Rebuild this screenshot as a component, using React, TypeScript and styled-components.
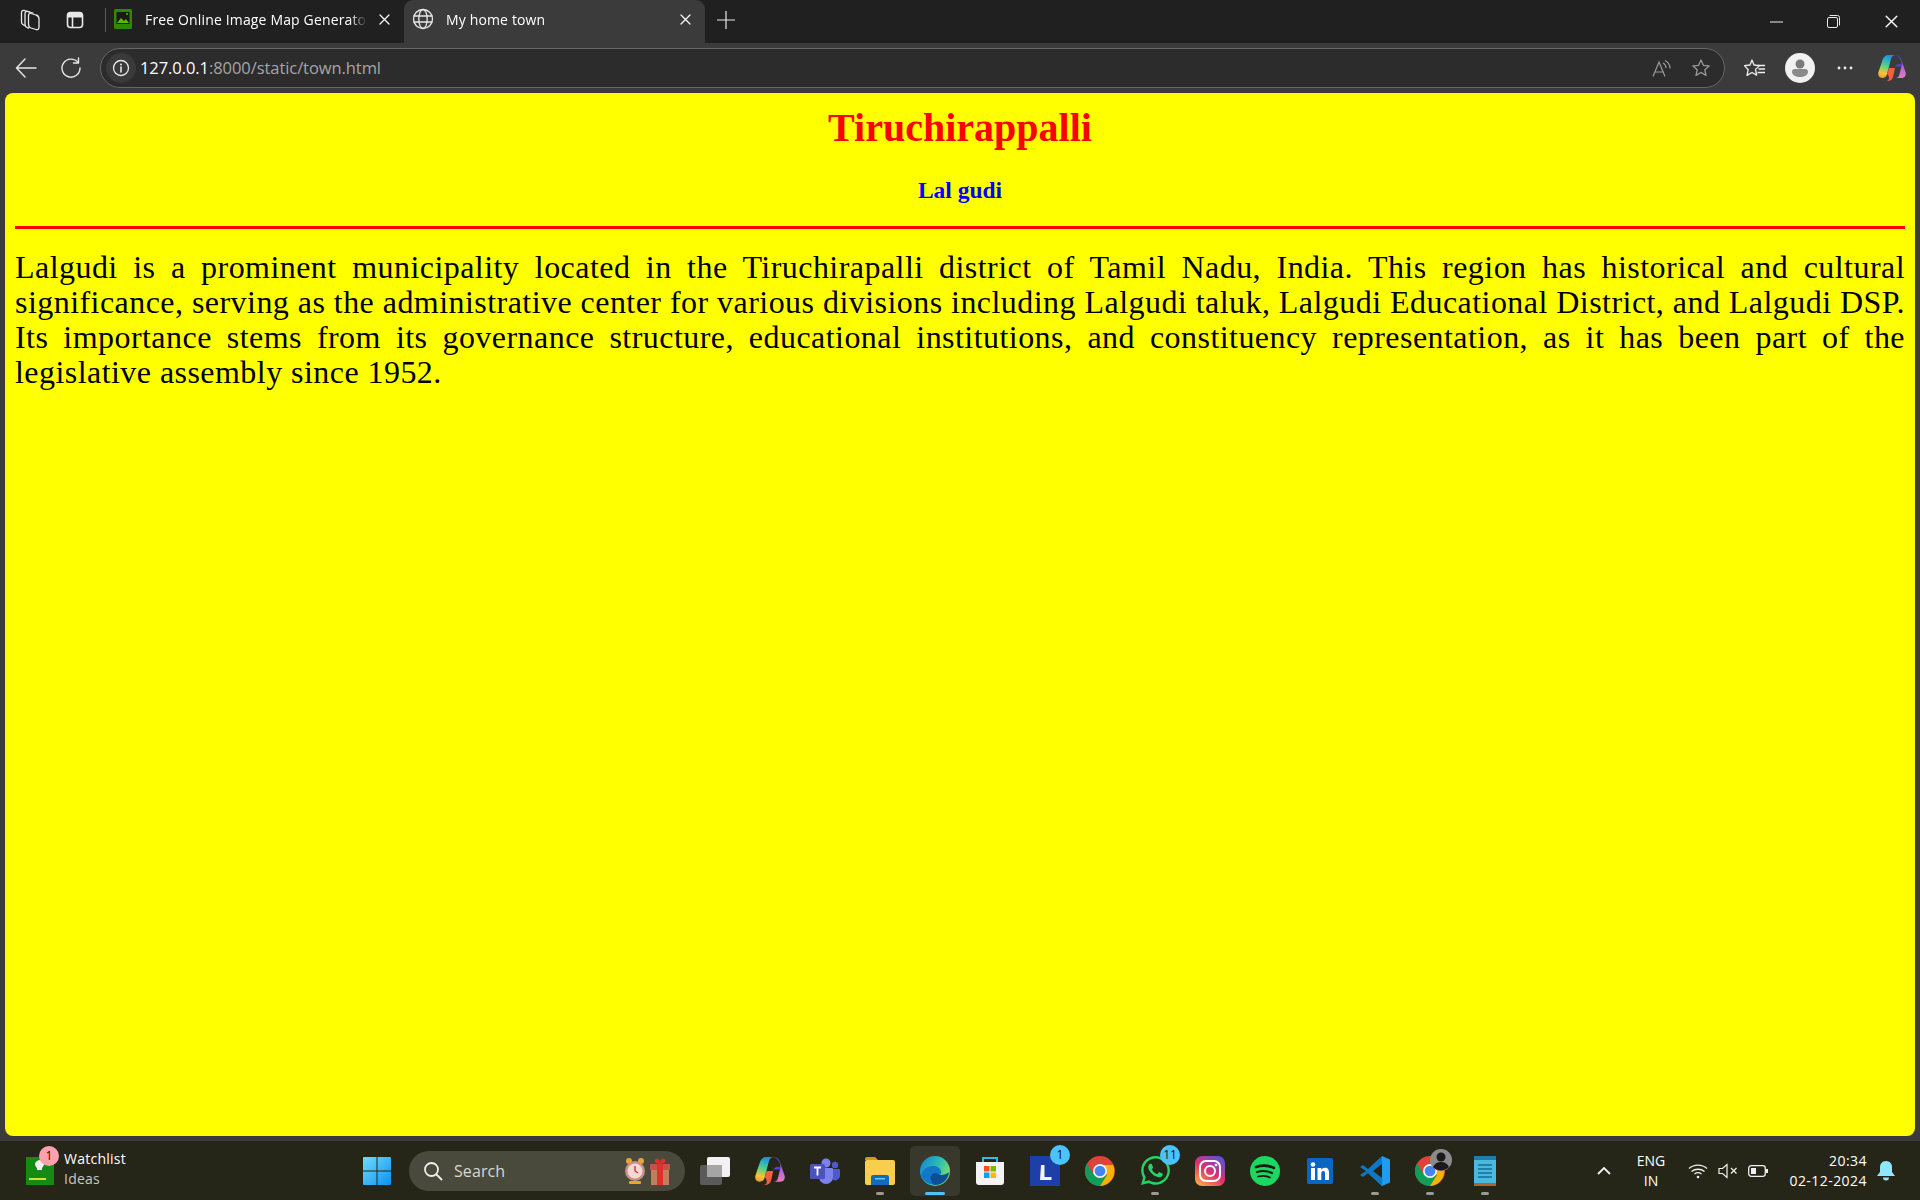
import React from "react";
import styled, { createGlobalStyle } from "styled-components";
import { FaWhatsapp } from "react-icons/fa";

const GlobalStyle = createGlobalStyle`
  html, body {
    margin: 0;
    padding: 0;
    background: #3b3b3b;
    overflow: hidden;
  }
  * {
    box-sizing: border-box;
  }
`;

const uiFont = `"Open Sans", "Noto Sans", "Liberation Sans", sans-serif`;

const Screen = styled.div`
  width: 1920px;
  height: 1200px;
  display: flex;
  flex-direction: column;
  background: #3b3b3b;
  font-family: ${uiFont};
`;

/* ---------- tab strip ---------- */

const TabStrip = styled.div`
  height: 43px;
  flex: none;
  display: flex;
  align-items: stretch;
  background: #202020;
  padding-left: 7px;
`;

const StripButton = styled.div<{ $w?: number }>`
  width: ${(p) => p.$w ?? 45}px;
  padding-bottom: 4px;
  display: flex;
  align-items: center;
  justify-content: center;
  flex: none;
`;

const StripDivider = styled.div`
  width: 1px;
  height: 24px;
  margin: 8px 1px 0 8px;
  background: #5a5a5a;
  flex: none;
`;

const Tab = styled.div<{ $active?: boolean }>`
  width: ${(p) => (p.$active ? "301px" : "297px")};
  flex: none;
  height: 43px;
  display: flex;
  align-items: center;
  gap: 12px;
  padding: 0 14px 5px ${(p) => (p.$active ? 8 : 6)}px;
  color: #fff;
  font-size: 14px;
  border-radius: 9px 9px 0 0;
  background: ${(p) => (p.$active ? "#3b3b3b" : "transparent")};
`;

const TabTitle = styled.span`
  flex: 1;
  white-space: nowrap;
  overflow: hidden;
  letter-spacing: 0.15px;
  -webkit-mask-image: linear-gradient(to right, #000 92%, transparent);
`;

const WindowControls = styled.div`
  margin-left: auto;
  display: flex;
  align-items: center;
`;

const WindowButton = styled.div`
  width: 57.5px;
  height: 43px;
  display: flex;
  align-items: center;
  justify-content: center;
`;

/* ---------- toolbar ---------- */

const Toolbar = styled.div`
  height: 50px;
  flex: none;
  display: flex;
  align-items: center;
  padding: 0 4px 0 3px;
  background: #3b3b3b;
`;

const ToolButton = styled.div<{ $w?: number }>`
  width: ${(p) => p.$w ?? 45}px;
  height: 38px;
  flex: none;
  display: flex;
  align-items: center;
  justify-content: center;
`;

const AddressBar = styled.div`
  width: 1625px;
  height: 40px;
  margin: 0 7px;
  flex: none;
  display: flex;
  align-items: center;
  border: 1.5px solid #666;
  border-radius: 20px;
  background: #2c2c2c;
  padding: 0 13px 0 5px;
`;

const InfoChip = styled.div`
  width: 30px;
  height: 30px;
  border-radius: 50%;
  background: #3a3a3a;
  display: flex;
  align-items: center;
  justify-content: center;
  flex: none;
`;

const Url = styled.div`
  margin-left: 4px;
  padding-bottom: 2px;
  font-size: 16.5px;
  letter-spacing: -0.07px;
  color: #a6a6a6;
  flex: 1;
  span {
    color: #fff;
  }
`;

const AddressIcons = styled.div`
  display: flex;
  align-items: center;
  gap: 19px;
`;

const Avatar = styled.div`
  width: 30px;
  height: 30px;
  border-radius: 50%;
  background: #f1f1f1;
  display: flex;
  align-items: center;
  justify-content: center;
`;

/* ---------- page ---------- */

const Viewport = styled.div`
  height: 1043px;
  margin: 0 5px;
  flex: none;
  background: #ffff00;
  border-radius: 8px;
  padding: 0 10px;
  font-family: "Liberation Serif", "Times New Roman", serif;
`;

const Heading = styled.h1`
  margin: 0;
  padding-top: 13px;
  text-align: center;
  font-size: 40px;
  line-height: 43px;
  font-weight: 700;
  color: #ff0000;
`;

const SubHeading = styled.h2`
  margin: 28px 0 0;
  text-align: center;
  font-size: 23.5px;
  line-height: 27px;
  font-weight: 700;
  color: #0000ff;
`;

const Rule = styled.hr`
  margin: 22px 0 0;
  height: 3px;
  border: none;
  background: #ff0000;
`;

const Article = styled.p`
  margin: 21px 0 0;
  font-family: "Liberation Serif", "Times New Roman", serif;
  font-size: 32px;
  line-height: 35px;
  letter-spacing: 0.45px;
  text-align: justify;
  color: #000;
`;

/* ---------- taskbar ---------- */

const Taskbar = styled.div`
  height: 59px;
  margin-top: 5px;
  padding-right: 15px;
  flex: none;
  display: grid;
  grid-template-columns: 352px 1fr auto;
  align-items: center;
  background: #262618;
  color: #fff;
`;

const Widget = styled.div`
  display: flex;
  align-items: center;
  padding-left: 26px;
  gap: 10px;
`;

const WidgetIcon = styled.div`
  position: relative;
  width: 28px;
  height: 28px;
  flex: none;
`;

const CountBadge = styled.div<{ $bg: string; $top: number; $right: number }>`
  position: absolute;
  top: ${(p) => p.$top}px;
  right: ${(p) => p.$right}px;
  width: 20px;
  height: 20px;
  border-radius: 50%;
  background: ${(p) => p.$bg};
  color: #111;
  font-size: 12px;
  line-height: 20px;
  text-align: center;
`;

const WidgetText = styled.div`
  font-size: 14px;
  line-height: 20px;
  letter-spacing: 0.25px;
  margin-top: -3px;
  small {
    display: block;
    font-size: 14px;
    color: #c9c9c0;
  }
`;

const Dock = styled.div`
  display: flex;
  align-items: center;
`;

const DockItem = styled.div<{ $active?: boolean; $gap?: number }>`
  position: relative;
  width: 50px;
  height: 50px;
  margin-right: ${(p) => p.$gap ?? 5}px;
  flex: none;
  display: flex;
  align-items: center;
  justify-content: center;
  border-radius: 5px;
  background: ${(p) => (p.$active ? "#38382c" : "transparent")};
`;

const RunDot = styled.div<{ $active?: boolean }>`
  position: absolute;
  bottom: 1px;
  left: 50%;
  transform: translateX(-50%);
  width: ${(p) => (p.$active ? 20 : 8)}px;
  height: 3px;
  border-radius: 2px;
  background: ${(p) => (p.$active ? "#4cc2ff" : "#9a9a90")};
`;

const SearchBox = styled.div`
  width: 276px;
  height: 40px;
  margin: 0 5px 0 0;
  flex: none;
  display: flex;
  align-items: center;
  gap: 11px;
  padding: 0 13px 0 14px;
  border-radius: 20px;
  background: #4a4a3c;
  color: #d8d8d0;
  font-size: 16px;
  letter-spacing: 0.1px;
`;

const SearchLabel = styled.span`
  flex: 1;
`;

const Tray = styled.div`
  display: flex;
  align-items: center;
  height: 100%;
`;

const TrayIcon = styled.div<{ $w: number }>`
  width: ${(p) => p.$w}px;
  flex: none;
  display: flex;
  align-items: center;
  justify-content: center;
`;

const Lang = styled.div`
  width: 60px;
  text-align: center;
  font-size: 14px;
  line-height: 20px;
  margin: 0 2px;
`;

const Clock = styled.div`
  width: 94px;
  text-align: right;
  font-size: 14px;
  line-height: 20px;
  letter-spacing: 0.45px;
`;

/* ---------- drawings ---------- */

const line = { fill: "none", stroke: "#e8e8e8", strokeWidth: 1.3, strokeLinecap: "round", strokeLinejoin: "round" } as const;

const Collections = () => (
  <svg width="22" height="24" viewBox="0 0 22 24">
    <path d="M9.500 7.500c0-1.500 1-2.500 2.500-2l5 1.500c2 .5 3 2 3 4v8c0 2-1 3-3 2.500l-5-1.500c-1.500-.5-2.500-2-2.500-3.500z" {...line} />
    <path d="M9.500 20c-2-.5-3.500-2-3.500-4V6c0-2 1-3 3-2.500l5 1.500" {...line} />
    <path d="M6 17.500c-2-.5-3.500-2-3.500-4V5c0-2 1-3 3-2.500l5 1.500" {...line} />
  </svg>
);

const TabActions = () => (
  <svg width="20" height="20" viewBox="0 0 20 20">
    <rect x="2.500" y="2.500" width="15" height="15" rx="3" {...line} strokeWidth={1.6} />
    <rect x="3" y="3" width="14" height="4.500" fill="#e8e8e8" />
    <path d="M7.500 7v10" {...line} strokeWidth={1.6} />
  </svg>
);

const Favicon = () => (
  <svg width="20" height="22" viewBox="0 0 20 22">
    <rect x="1" y="1" width="18" height="20" rx="1.500" fill="#2e8b00" />
    <rect x="3.500" y="4" width="13" height="12" fill="#1a1a1a" />
    <path d="M4 15l4-5 3 3 2-2 3 4z" fill="#4fc000" />
    <circle cx="14" cy="6" r="1" fill="#4fc000" />
  </svg>
);

const Globe = () => (
  <svg width="22" height="22" viewBox="0 0 22 22">
    <circle cx="11" cy="11" r="9.500" {...line} />
    <ellipse cx="11" cy="11" rx="4.200" ry="9.500" {...line} />
    <path d="M2 8h18M2 14h18" {...line} />
  </svg>
);

const Cross = ({ size = 11 }: { size?: number }) => (
  <svg width={size} height={size} viewBox="0 0 11 11">
    <path d="M1 1l9 9M10 1l-9 9" {...line} strokeWidth={1.2} stroke="#fff" />
  </svg>
);

const Plus = () => (
  <svg width="18" height="18" viewBox="0 0 18 18">
    <path d="M9 0v18M0 9h18" {...line} strokeWidth={1.2} />
  </svg>
);

const Minimize = () => (
  <svg width="13" height="2" viewBox="0 0 13 2">
    <path d="M0 1h13" stroke="#eee" strokeWidth="1" />
  </svg>
);

const Restore = () => (
  <svg width="13" height="13" viewBox="0 0 13 13">
    <rect x="0.500" y="2.500" width="10" height="10" rx="1.500" {...line} strokeWidth={1} />
    <path d="M3 .5h7.500a2 2 0 0 1 2 2V10" {...line} strokeWidth={1} />
  </svg>
);

const Back = () => (
  <svg width="22" height="20" viewBox="0 0 22 20">
    <path d="M10 1L1.500 10l8.500 9M2 10h19" {...line} strokeWidth={1.4} />
  </svg>
);

const Reload = () => (
  <svg width="22" height="22" viewBox="0 0 22 22">
    <path d="M18 5.500A9 9 0 1 0 20 11" {...line} strokeWidth={1.4} />
    <path d="M18.500 1v5h-5" {...line} strokeWidth={1.4} />
  </svg>
);

const Info = () => (
  <svg width="18" height="18" viewBox="0 0 18 18">
    <circle cx="9" cy="9" r="7.500" {...line} />
    <path d="M9 8v5" {...line} strokeWidth={1.6} />
    <circle cx="9" cy="5.500" r="1" fill="#e8e8e8" />
  </svg>
);

const ReadAloud = () => (
  <svg width="20" height="20" viewBox="0 0 20 20" fill="none" stroke="#9a9a9a" strokeWidth="1.2">
    <path d="M1 18.500L7 4l6 14.500M3 14h8" />
    <path d="M11 5c2 1 3 3 3 5M13 2.500c3 1.500 5 4.500 5 8" />
  </svg>
);

const starPath = "M10 2l2.400 5.300 5.700.6-4.300 3.800 1.200 5.700L10 14.500l-5 2.900 1.200-5.700L1.900 7.900l5.700-.6z";

const Star = () => (
  <svg width="20" height="20" viewBox="0 0 20 20">
    <path d={starPath} fill="none" stroke="#9a9a9a" strokeWidth="1.300" strokeLinejoin="round" />
  </svg>
);

const Favourites = () => (
  <svg width="22" height="20" viewBox="0 0 22 20">
    <path d="M8 2l2 5 5.500.6-4 3.800 1.200 5.700L8 14.500l-5 2.900 1.200-5.700L0.500 7.600 6 7z" fill="none" stroke="#f0f0f0" strokeWidth="1.300" strokeLinejoin="round" />
    <path d="M14 7.500h7M14.500 11h6.500M13.500 14.500h7.500" stroke="#f0f0f0" strokeWidth="1.300" />
  </svg>
);

const Person = () => (
  <svg width="22" height="22" viewBox="0 0 22 22">
    <circle cx="11" cy="7" r="4.500" fill="#7a7a7a" />
    <path d="M3 15a3 3 0 0 1 3-3h10a3 3 0 0 1 3 3c0 3-4 5-8 5s-8-2-8-5z" fill="#8a8a8a" />
  </svg>
);

const Dots = () => (
  <svg width="16" height="4" viewBox="0 0 16 4">
    <circle cx="2" cy="2" r="1.400" fill="#eee" />
    <circle cx="8" cy="2" r="1.400" fill="#eee" />
    <circle cx="14" cy="2" r="1.400" fill="#eee" />
  </svg>
);

const Copilot = ({ size = 28, id }: { size?: number; id: string }) => (
  <svg width={size} height={size} viewBox="0 0 28 28">
    <defs>
      <linearGradient id={`${id}a`} x1="0.500" y1="0" x2="0.300" y2="1">
        <stop offset="0" stopColor="#1a8fe8" />
        <stop offset="0.450" stopColor="#4fd08f" />
        <stop offset="0.800" stopColor="#f5c82e" />
        <stop offset="1" stopColor="#f09a3a" />
      </linearGradient>
      <linearGradient id={`${id}b`} x1="0.500" y1="0" x2="0.500" y2="1">
        <stop offset="0" stopColor="#2438b8" />
        <stop offset="0.400" stopColor="#9a62e6" />
        <stop offset="1" stopColor="#ee78c0" />
      </linearGradient>
    </defs>
    <path d="M10 1h8c-3 0-4.500 2-5 4l-4 15c-.6 2.500-2 4-5 4H4c-3 0-4.500-3-3.500-6l4-12C5.500 3 7.500 1 10 1z" fill={`url(#${id}a)`} />
    <path d="M15 1h3c2.500 0 4 1.500 5 4l4.500 13c1 3-.5 6-3.500 6h-7c3 0 4-1.500 4.500-4l2-8c.5-3 0-5-1.500-7C20 2 18 1 15 1z" fill={`url(#${id}b)`} />
    <path d="M20 10c2 0 3.500 0 4 1l-1.500 1.500h-6z" fill="#5a3fd6" />
    <path d="M9 20l2-6h6l-1.500 7c-.6 3-2 6-5.500 6H8c2 0 3-1.500 3-3 0-1.500-1-4-2-4z" fill="#f2603f" />
  </svg>
);

const WatchlistIcon = () => (
  <svg width="28" height="28" viewBox="0 0 28 28">
    <rect width="28" height="30" y="-1" rx="1.500" fill="#148c14" />
    <path d="M11 4a5.500 5.500 0 0 1 6 0c2 2 1 5-1 7v2h-5v-2c-2-2-3-5 0-7z" fill="#f0f0f0" />
    <rect x="3" y="21" width="17" height="2" fill="#cfe33a" />
  </svg>
);

const WinLogo = () => (
  <svg width="30" height="30" viewBox="0 0 30 30">
    <defs>
      <linearGradient id="winGrad" x1="0" y1="0" x2="1" y2="1">
        <stop offset="0" stopColor="#6fdcff" />
        <stop offset="1" stopColor="#0f90ee" />
      </linearGradient>
    </defs>
    <path d="M1 2a1 1 0 0 1 1-1h12.500v13.500H1zM15.500 1H28a1 1 0 0 1 1 1v12.500H15.500zM1 15.500h13.500V29H2a1 1 0 0 1-1-1zM15.500 15.500H29V28a1 1 0 0 1-1 1H15.500z" fill="url(#winGrad)" />
  </svg>
);

const SearchGlass = () => (
  <svg width="20" height="20" viewBox="0 0 20 20" fill="none" stroke="#eee" strokeWidth="1.800" strokeLinecap="round">
    <circle cx="8.500" cy="8.500" r="6.500" />
    <path d="M13.500 13.500L18.500 18.500" />
  </svg>
);

const AlarmGift = () => (
  <svg width="48" height="32" viewBox="0 0 48 32">
    <circle cx="5" cy="6" r="3" fill="#e8a72c" />
    <circle cx="17" cy="6" r="3" fill="#e8a72c" />
    <rect x="5" y="26" width="12" height="3" rx="1" fill="#e8a72c" />
    <circle cx="11" cy="16" r="10" fill="#c98f8a" />
    <circle cx="11" cy="16" r="7.500" fill="#f3d8d4" />
    <path d="M11 11v5l3 2" stroke="#c53b3b" strokeWidth="1.400" fill="none" />
    <rect x="27" y="13" width="18" height="17" fill="#bf7f5c" />
    <rect x="26" y="9" width="20" height="6" fill="#c9504a" />
    <rect x="33" y="9" width="6" height="21" fill="#e0302c" />
    <path d="M36 9c-5 0-7-4-4-5s4 2 4 5c0-3 1-6 4-5s1 5-4 5z" fill="#e0302c" />
  </svg>
);

const TaskView = () => (
  <svg width="32" height="28" viewBox="0 0 32 28">
    <rect x="1" y="8" width="22" height="20" rx="2" fill="#5a5a5a" />
    <rect x="8" y="0" width="23" height="20" rx="2" fill="#f2f2f2" />
    <rect x="8" y="8" width="15" height="12" fill="#a5a5a5" />
  </svg>
);

const Teams = () => (
  <svg width="30" height="26" viewBox="0 0 30 26">
    <circle cx="16" cy="5" r="4.500" fill="#7b83eb" />
    <circle cx="25" cy="7" r="3.200" fill="#5059c9" />
    <path d="M20 11h9a1 1 0 0 1 1 1v6a5 5 0 0 1-7 4z" fill="#5059c9" />
    <path d="M9 10h13a1 1 0 0 1 1 1v8a7 7 0 0 1-14 0z" fill="#7b83eb" />
    <rect x="0" y="6" width="15" height="15" rx="1.500" fill="#4b53bc" />
    <path d="M4 9.500h7M7.500 9.500v8" stroke="#fff" strokeWidth="1.800" />
  </svg>
);

const Files = () => (
  <svg width="30" height="28" viewBox="0 0 30 28">
    <path d="M0 2a2 2 0 0 1 2-2h8l3 3h-13z" fill="#d29a1f" />
    <rect y="3" width="30" height="25" rx="2" fill="#f9cd4e" />
    <path d="M6 20a2 2 0 0 1 2-2h14a2 2 0 0 1 2 2v8H6z" fill="#0f6cbd" />
    <rect x="10" y="21" width="10" height="1.500" fill="#7cc4f5" />
  </svg>
);

const Edge = () => (
  <svg width="30" height="30" viewBox="0 0 30 30">
    <defs>
      <linearGradient id="edgeGrad" x1="0" y1="0.200" x2="1" y2="0.700">
        <stop offset="0" stopColor="#1488d8" />
        <stop offset="0.550" stopColor="#2fc0b0" />
        <stop offset="1" stopColor="#8ee25a" />
      </linearGradient>
    </defs>
    <circle cx="15" cy="15" r="15" fill="url(#edgeGrad)" />
    <path d="M1 20c1-6 6-10 12-10 4 0 7 2 8 5 1 3-1 4-3 4-1.500 0-2-1-4-1-2.500 0-4 2-3 5 .7 2 3 4 6 5.500a15 15 0 0 1-16-8.500z" fill="#1277c8" />
    <path d="M11 24c-1.500-3 .5-7 4-7 2.500 0 3.500 2 6 2 3 0 6-1 8-3-.5 7-6 13-14 13-2 0-3-3-4-5z" fill="#0c4f96" />
  </svg>
);

const Store = () => (
  <svg width="30" height="30" viewBox="0 0 30 30">
    <path d="M8 6V2h14v4" fill="none" stroke="#35b8e8" strokeWidth="2" />
    <path d="M1 6h28v20a3 3 0 0 1-3 3H4a3 3 0 0 1-3-3z" fill="#f4f4f4" />
    <rect x="9" y="10" width="5.500" height="5.500" fill="#f25022" />
    <rect x="15.500" y="10" width="5.500" height="5.500" fill="#7fba00" />
    <rect x="9" y="16.500" width="5.500" height="5.500" fill="#00a4ef" />
    <rect x="15.500" y="16.500" width="5.500" height="5.500" fill="#ffb900" />
  </svg>
);

const LApp = () => (
  <svg width="30" height="30" viewBox="0 0 30 30">
    <rect width="30" height="30" fill="#1d3fa8" />
    <path d="M11 9h3.500v12h7v3H10z" fill="#f4f4f4" />
  </svg>
);

const Chrome = () => (
  <svg width="30" height="30" viewBox="0 0 30 30">
    <circle cx="15" cy="15" r="15" fill="#db4437" />
    <path d="M2 7.500A15 15 0 0 0 15 30l7.500-11H9z" fill="#0f9d58" />
    <path d="M15 9h13a15 15 0 0 1-13 21l7-11z" fill="#f4b400" />
    <circle cx="15" cy="15" r="7" fill="#f4f4f4" />
    <circle cx="15" cy="15" r="5.300" fill="#4285f4" />
  </svg>
);

const Instagram = () => (
  <svg width="30" height="30" viewBox="0 0 30 30">
    <defs>
      <linearGradient id="igGrad" x1="0.100" y1="1" x2="0.800" y2="0">
        <stop offset="0" stopColor="#fcb045" />
        <stop offset="0.500" stopColor="#e1306c" />
        <stop offset="1" stopColor="#5b51d8" />
      </linearGradient>
    </defs>
    <rect width="30" height="30" rx="7" fill="url(#igGrad)" />
    <rect x="5" y="5" width="20" height="20" rx="6" fill="none" stroke="#fff" strokeWidth="2" />
    <circle cx="15" cy="15" r="5" fill="none" stroke="#fff" strokeWidth="2" />
    <circle cx="21" cy="9" r="1.300" fill="#fff" />
  </svg>
);

const Spotify = () => (
  <svg width="30" height="30" viewBox="0 0 30 30" fill="none" stroke="#1a1a14" strokeLinecap="round">
    <circle cx="15" cy="15" r="15" fill="#1ed760" stroke="none" />
    <path d="M6 11c6-2 13-1.500 18 1" strokeWidth="2.600" />
    <path d="M7 16c5-1.500 11-1 15 1" strokeWidth="2.200" />
    <path d="M8 20.500c4-1 9-.8 12 1" strokeWidth="1.800" />
  </svg>
);

const LinkedIn = () => (
  <svg width="26" height="26" viewBox="0 0 26 26">
    <rect width="26" height="26" rx="1.500" fill="#0a66c2" />
    <rect x="4" y="10" width="4" height="12" fill="#fff" />
    <circle cx="6" cy="6.500" r="2.300" fill="#fff" />
    <path d="M10.500 10h3.800v1.700c.8-1.300 2-2 3.700-2 3 0 4 2 4 5V22h-4v-6.500c0-1.700-.5-2.500-1.800-2.500-1.400 0-1.900 1-1.900 2.500V22h-3.800z" fill="#fff" />
  </svg>
);

const VSCode = () => (
  <svg width="30" height="30" viewBox="0 0 30 30">
    <path d="M22 0l8 3.500v23L22 30 8 17l14-13z" fill="#1f9cf0" />
    <path d="M22 0v30L8 17 3 21l-3-2 6-4-6-4 3-2 5 4z" fill="#0f78c4" />
    <path d="M22 8v14l-9-7z" fill="#262618" />
  </svg>
);

const Notepad = () => (
  <svg width="22" height="30" viewBox="0 0 22 30">
    <rect y="1" width="22" height="27" fill="#4db8dc" />
    <rect y="0" width="22" height="4" fill="#1d7ea8" />
    <rect y="27" width="22" height="3" fill="#b5622a" />
    <path d="M4 9h14M4 13h14M4 17h14M4 21h14" stroke="#0f6f94" strokeWidth="1.500" />
  </svg>
);

const ProfileBadge = () => (
  <svg width="22" height="22" viewBox="0 0 22 22">
    <circle cx="11" cy="11" r="11" fill="#8b8b8b" />
    <circle cx="11" cy="8" r="4.500" fill="#1b1b1b" />
    <path d="M3 18c2-4 5-5 8-5s6 1 8 5a11 11 0 0 1-16 0z" fill="#1b1b1b" />
  </svg>
);

const Chevron = () => (
  <svg width="16" height="10" viewBox="0 0 16 10">
    <path d="M2 8l6-6 6 6" fill="none" stroke="#f0f0f0" strokeWidth="1.800" />
  </svg>
);

const Wifi = () => (
  <svg width="20" height="16" viewBox="0 0 20 16" fill="none" stroke="#f0f0f0" strokeWidth="1.300">
    <path d="M1 5.500c5-4.500 13-4.500 18 0M3.500 8.500c3.500-3 9.500-3 13 0M6.500 11c2-1.500 5-1.500 7 0" />
    <circle cx="10" cy="14" r="1.300" fill="#f0f0f0" stroke="none" />
  </svg>
);

const Muted = () => (
  <svg width="20" height="16" viewBox="0 0 20 16" fill="none" stroke="#f0f0f0" strokeWidth="1.200">
    <path d="M1 5.500h3.500L9 1.500v13l-4.500-4H1z" />
    <path d="M13 5l5.500 5.500M18.500 5L13 10.500" />
  </svg>
);

const Battery = () => (
  <svg width="20" height="14" viewBox="0 0 20 14">
    <rect x="0.700" y="1.700" width="16.600" height="10.600" rx="2.500" fill="none" stroke="#f0f0f0" strokeWidth="1.300" />
    <rect x="3" y="4" width="5" height="6" fill="#f0f0f0" />
    <rect x="18" y="5" width="2" height="4" fill="#f0f0f0" />
  </svg>
);

const Bell = () => (
  <svg width="18" height="20" viewBox="0 0 18 20">
    <path d="M9 0c4 0 6 3 6 6v5l3 4H0l3-4V6c0-3 2-6 6-6z" fill="#8fe6ff" />
    <path d="M6 16.500h6a3 3 0 0 1-6 0z" fill="#8fe6ff" />
  </svg>
);

const articleText =
  "Lalgudi is a prominent municipality located in the Tiruchirapalli district of Tamil Nadu, India. This region has historical and cultural significance, serving as the administrative center for various divisions including Lalgudi taluk, Lalgudi Educational District, and Lalgudi DSP. Its importance stems from its governance structure, educational institutions, and constituency representation, as it has been part of the legislative assembly since 1952.";

const dockApps: { key: string; icon: React.ReactNode; running?: boolean; active?: boolean; badge?: string }[] = [
  { key: "task", icon: <TaskView /> },
  { key: "copilot", icon: <Copilot size={30} id="dockCop" /> },
  { key: "teams", icon: <Teams /> },
  { key: "files", icon: <Files />, running: true },
  { key: "edge", icon: <Edge />, active: true },
  { key: "store", icon: <Store /> },
  { key: "lapp", icon: <LApp />, badge: "1" },
  { key: "chrome", icon: <Chrome /> },
  { key: "whatsapp", icon: <FaWhatsapp size={33} color="#25d366" />, running: true, badge: "11" },
  { key: "instagram", icon: <Instagram /> },
  { key: "spotify", icon: <Spotify /> },
  { key: "linkedin", icon: <LinkedIn /> },
  { key: "vscode", icon: <VSCode />, running: true },
  { key: "chrome2", icon: <Chrome />, running: true },
  { key: "notepad", icon: <Notepad />, running: true },
];

const ProfileSpot = styled.div`
  position: absolute;
  top: 3px;
  right: 3px;
`;

export default function App() {
  return (
    <Screen>
      <GlobalStyle />
      <TabStrip>
        <StripButton><Collections /></StripButton>
        <StripButton><TabActions /></StripButton>
        <StripDivider />
        <Tab>
          <Favicon />
          <TabTitle>Free Online Image Map Generator</TabTitle>
          <Cross />
        </Tab>
        <Tab $active>
          <Globe />
          <TabTitle>My home town</TabTitle>
          <Cross />
        </Tab>
        <StripButton $w={41}><Plus /></StripButton>
        <WindowControls>
          <WindowButton><Minimize /></WindowButton>
          <WindowButton><Restore /></WindowButton>
          <WindowButton><Cross size={13} /></WindowButton>
        </WindowControls>
      </TabStrip>
      <Toolbar>
        <ToolButton><Back /></ToolButton>
        <ToolButton><Reload /></ToolButton>
        <AddressBar>
          <InfoChip><Info /></InfoChip>
          <Url><span>127.0.0.1</span>:8000/static/town.html</Url>
          <AddressIcons>
            <ReadAloud />
            <Star />
          </AddressIcons>
        </AddressBar>
        <ToolButton><Favourites /></ToolButton>
        <ToolButton><Avatar><Person /></Avatar></ToolButton>
        <ToolButton><Dots /></ToolButton>
        <ToolButton $w={50}><Copilot id="barCop" /></ToolButton>
      </Toolbar>
      <Viewport>
        <Heading>Tiruchirappalli</Heading>
        <SubHeading>Lal gudi</SubHeading>
        <Rule />
        <Article>{articleText}</Article>
      </Viewport>
      <Taskbar>
        <Widget>
          <WidgetIcon>
            <WatchlistIcon />
            <CountBadge $bg="#ffa0ac" $top={-11} $right={-5}>1</CountBadge>
          </WidgetIcon>
          <WidgetText>
            Watchlist
            <small>Ideas</small>
          </WidgetText>
        </Widget>
        <Dock>
          <DockItem $gap={7}><WinLogo /></DockItem>
          <SearchBox>
            <SearchGlass />
            <SearchLabel>Search</SearchLabel>
            <AlarmGift />
          </SearchBox>
          {dockApps.map((app) => (
            <DockItem key={app.key} $active={app.active}>
              {app.icon}
              {app.badge && <CountBadge $bg="#4cc2ff" $top={-1} $right={0}>{app.badge}</CountBadge>}
              {app.key === "chrome2" && <ProfileSpot><ProfileBadge /></ProfileSpot>}
              {(app.running || app.active) && <RunDot $active={app.active} />}
            </DockItem>
          ))}
        </Dock>
        <Tray>
          <TrayIcon $w={30}><Chevron /></TrayIcon>
          <Lang>ENG<br />IN</Lang>
          <TrayIcon $w={30}><Wifi /></TrayIcon>
          <TrayIcon $w={30}><Muted /></TrayIcon>
          <TrayIcon $w={30}><Battery /></TrayIcon>
          <Clock>20:34<br />02-12-2024</Clock>
          <TrayIcon $w={38}><Bell /></TrayIcon>
        </Tray>
      </Taskbar>
    </Screen>
  );
}
